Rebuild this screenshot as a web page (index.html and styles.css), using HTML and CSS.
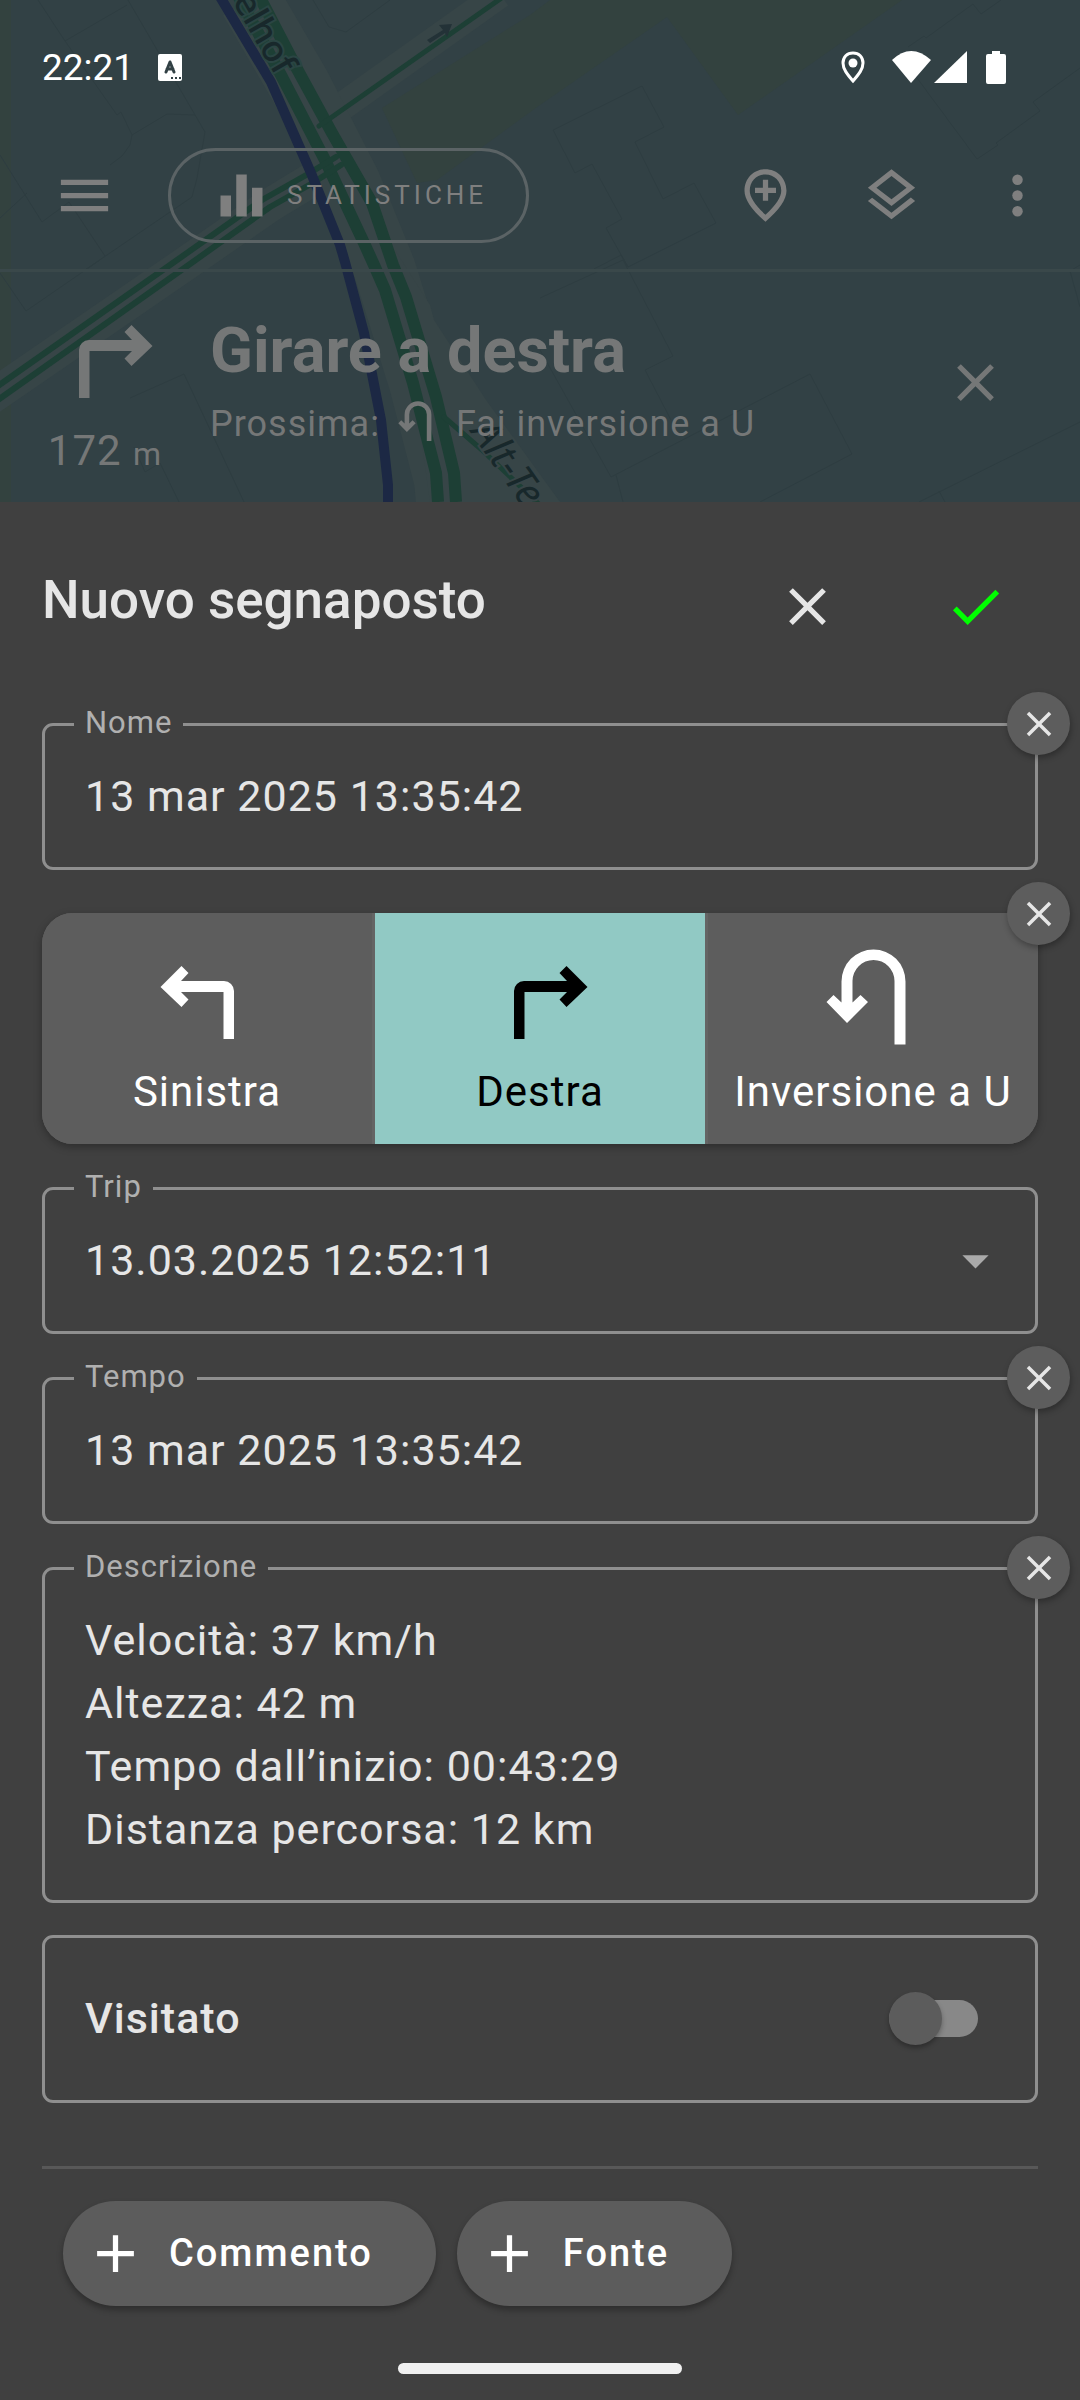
FILE: index.html
```html
<!DOCTYPE html>
<html lang="it">
<head>
<meta charset="utf-8">
<meta name="viewport" content="width=device-width, initial-scale=1">
<title>Nuovo segnaposto</title>
<link rel="stylesheet" href="styles.css">
</head>
<body>
<svg class="defs" aria-hidden="true">
  <symbol id="close" viewBox="0 0 24 24"><path d="M19 6.41 17.59 5 12 10.59 6.41 5 5 6.41 10.59 12 5 17.59 6.41 19 12 13.41 17.59 19 19 17.59 13.41 12z"/></symbol>
  <symbol id="plus" viewBox="0 0 24 24"><path d="M19 13h-6v6h-2v-6H5v-2h6V5h2v6h6z"/></symbol>
  <symbol id="turn" viewBox="0 0 105 105"><path d="M5.5 43 26.5 22 33.5 29 26 37H69a10 10 0 0 1 10 10V95H68.5V48H26L33.5 55.5 26.5 63Z"/></symbol>
  <symbol id="turn-right" viewBox="0 0 105 105"><path transform="translate(105 0) scale(-1 1)" d="M5.5 43 26.5 22 33.5 29 26 37H69a10 10 0 0 1 10 10V95H68.5V48H26L33.5 55.5 26.5 63Z"/></symbol>
  <symbol id="uturn" viewBox="0 0 105 105"><path d="M5.5 58 12.5 51 20.5 58.5V37.5A32 32 0 0 1 84.5 37.5V100.5H73.5V37A21 21 0 0 0 31.5 37V58.5L39.5 51 47 58 26 79Z"/></symbol>
</svg>

<header class="top">
  <svg class="map" viewBox="0 0 1080 502" preserveAspectRatio="xMidYMin slice" aria-hidden="true">
    <rect width="1080" height="502" fill="#324145"/>
    <rect width="11" height="502" fill="#33423f"/>
    <path fill="#33423f" d="M550 0 530 15 382 108 417 183 437 180 540 105 667 17 738 115 902 0Z"/>
    <g fill="none" stroke="#2e3d41" stroke-width="1">
      <path d="M553 130 642 86 664 127 635 142 663 199 694 183 716 223 628 267 606 228 622 219 592 164 575 173ZM594 269 621 255 628 267"/>
      <path d="M908 47 924 36 926 38 973 4 981 14 1001 0M917 78 977 159 998 145 996 143 1040 111 1033 102 1080 68"/>
      <path d="M38 0 65 41 117 115 121 112 132 135 130 145 122 156 110 165M128 0 205 132 197 178 192 197 85 270M65 41 127 5M132 135 167 114 195 115M0 155 42 222 69 202 105 256M313 0 329 27 346 32 390 0"/>
      <path d="M130 398 184 374 244 502M134 447 145 472 160 463 179 502M0 273 26 311 100 260M0 218 27 193"/>
      <path d="M540 298 623 260 673 356 645 370 671 420M540 350 611 477 810 374 852 454 760 502M616 475 623 502M919 502 1080 422M939 491 945 502"/>
      <path d="M1080 307 1070 271 1080 265"/>
    </g>
    <g fill="none" stroke="#374547">
      <path stroke-width="34" d="M336 165 270 205 185 264-10 398"/>
      <path stroke-width="28" d="M330 115 500-6"/>
      <path stroke-width="62" d="M250 0 300 86 350 184 385 270 420 383 445 480 447 502"/>
      <path fill="#374547" stroke="none" d="M395 250 430 305 434 320 486 400 560 502H430Z"/>
    </g>
    <g fill="none" stroke="#1d3f35" stroke-linejoin="round">
      <path stroke-width="12" d="M235-10 281 75 325 160 364 243 374 265 385 290 413 383 436 473 438 502"/>
      <path stroke-width="12" d="M256-10 296 67 332 133 372 203 393 265 406 297 436 397 454 473 456 502"/>
      <path stroke-width="5" stroke-linecap="round" d="M319 126 332 117 510-8M444 417 482 450 545 510"/>
      <path stroke-width="6" stroke-linecap="round" d="M336 157 308 174 262 200 170 265-5 388M341 165 311 184 270 207 190 264-5 402"/>
    </g>
    <path fill="none" stroke="#1c2844" stroke-width="10" d="M219-5 271 82 311 173 340 245 345 262 364 333 381 420 388 485V502"/>
    <path fill="#233237" d="M427 40 443 30 439 25 452 24 447 37 445 33 430 43Z"/>
    <g class="street">
      <text x="276" y="77" text-anchor="end" transform="rotate(60 276 77)">elhof</text>
      <text class="street-minor" x="470" y="432" transform="rotate(55 470 432)">Alt-Te</text>
    </g>
  </svg>

  <div class="status">
    <span class="clock">22:21</span>
    <svg class="badge-a" width="24" height="27" viewBox="0 0 24 27" aria-hidden="true"><rect width="24" height="27" rx="2" fill="#fff"/><path d="M8 18 12 8 16 18M9 15h6" fill="none" stroke="#324145" stroke-width="3" stroke-linecap="round" stroke-linejoin="round"/><path d="M13 24h2m2 0h2m2 0h2" stroke="#324145" stroke-width="2"/></svg>
    <svg class="status-icons" width="166" height="35" viewBox="0 0 166 35" fill="#fff" aria-hidden="true">
      <path d="M13 3C7 3 3 7 3 13c0 6 4 11 10 18 6-7 10-12 10-18 0-6-4-10-10-10Z" fill="none" stroke="#fff" stroke-width="3"/><circle cx="13" cy="13" r="4.500"/>
      <path d="M52 10Q71-8 91 10L71 33Z"/><path d="M94 33 127 1V33Z"/>
      <path d="M152 1h8v3h4q2 0 2 2v26q0 2-2 2h-16q-2 0-2-2V6q0-2 2-2h4Z"/>
    </svg>
  </div>

  <nav class="toolbar">
    <button class="icon-btn" aria-label="Menu"><svg viewBox="0 0 24 24"><path d="M3 18h18v-2H3zm0-5h18v-2H3zm0-7v2h18V6z"/></svg></button>
    <button class="stats"><svg viewBox="0 0 24 24" aria-hidden="true"><path d="M10 20h4V4h-4zm-6 0h4v-8H4zM16 9v11h4V9z"/></svg><span>STATISTICHE</span></button>
    <div class="actions">
      <button class="icon-btn" aria-label="Aggiungi segnaposto"><svg viewBox="0 0 24 24"><path fill-rule="evenodd" d="M12 2c4.200 0 8 3.220 8 8.200 0 3.320-2.670 7.250-8 11.800-5.330-4.550-8-8.480-8-11.800C4 5.220 7.800 2 12 2zm6 8.200C18 6.570 15.350 4 12 4s-6 2.570-6 6.200c0 2.340 1.950 5.440 6 9.140 4.050-3.700 6-6.800 6-9.140zM11 6h2v3h3v2h-3v3h-2v-3H8V9h3z"/></svg></button>
      <button class="icon-btn" aria-label="Livelli"><svg viewBox="0 0 24 24"><path d="M11.990 18.540l-7.370-5.730L3 14.070l9 7 9-7-1.630-1.270-7.380 5.740zM12 16l7.360-5.730L21 9l-9-7-9 7 1.630 1.270L12 16zm0-11.470L17.740 9 12 13.470 6.260 9 12 4.530z"/></svg></button>
      <button class="icon-btn" aria-label="Altro"><svg viewBox="0 0 24 24"><circle cx="12" cy="6" r="2"/><circle cx="12" cy="12" r="2"/><circle cx="12" cy="18" r="2"/></svg></button>
    </div>
  </nav>

  <section class="guide">
    <div class="maneuver">
      <svg class="arrow"><use href="#turn-right"/></svg>
      <div class="distance">172 <small>m</small></div>
    </div>
    <div class="instruction">
      <h1>Girare a destra</h1>
      <div class="next"><span>Prossima:</span><svg><use href="#uturn"/></svg><span>Fai inversione a U</span></div>
    </div>
    <button class="icon-btn end-guide" aria-label="Chiudi navigazione"><svg><use href="#close"/></svg></button>
  </section>
</header>

<main class="sheet">
  <div class="sheet-head">
    <h2>Nuovo segnaposto</h2>
    <button class="icon-btn" aria-label="Annulla"><svg><use href="#close"/></svg></button>
    <button class="icon-btn confirm" aria-label="Conferma"><svg viewBox="0 0 24 24"><path d="M9 16.170 4.830 12l-1.420 1.410L9 19 21 7l-1.410-1.410z"/></svg></button>
  </div>

  <form class="form">
    <div class="item outlined">
      <label for="nome">Nome</label>
      <input id="nome" type="text" value="13 mar 2025 13:35:42">
      <button type="button" class="remove" aria-label="Rimuovi nome"><svg><use href="#close"/></svg></button>
    </div>

    <div class="item">
      <div class="segments" role="radiogroup" aria-label="Direzione">
        <label><input type="radio" name="dir"><svg class="arrow"><use href="#turn"/></svg><span>Sinistra</span></label>
        <label><input type="radio" name="dir" checked><svg class="arrow"><use href="#turn-right"/></svg><span>Destra</span></label>
        <label><input type="radio" name="dir"><svg class="arrow"><use href="#uturn"/></svg><span>Inversione a U</span></label>
      </div>
      <button type="button" class="remove" aria-label="Rimuovi direzione"><svg><use href="#close"/></svg></button>
    </div>

    <div class="item outlined">
      <label for="trip">Trip</label>
      <select id="trip"><option>13.03.2025 12:52:11</option></select>
      <svg class="caret" viewBox="0 0 24 24" aria-hidden="true"><path d="M7 10l5 5 5-5z"/></svg>
    </div>

    <div class="item outlined">
      <label for="tempo">Tempo</label>
      <input id="tempo" type="text" value="13 mar 2025 13:35:42">
      <button type="button" class="remove" aria-label="Rimuovi tempo"><svg><use href="#close"/></svg></button>
    </div>

    <div class="item outlined">
      <label for="descrizione">Descrizione</label>
      <textarea id="descrizione" rows="4">Velocità: 37 km/h
Altezza: 42 m
Tempo dall’inizio: 00:43:29
Distanza percorsa: 12 km</textarea>
      <button type="button" class="remove" aria-label="Rimuovi descrizione"><svg><use href="#close"/></svg></button>
    </div>

    <div class="visited">
      <label for="visitato">Visitato</label>
      <input id="visitato" class="switch" type="checkbox" role="switch">
    </div>

    <div class="extras">
      <button type="button" class="chip"><svg><use href="#plus"/></svg>Commento</button>
      <button type="button" class="chip"><svg><use href="#plus"/></svg>Fonte</button>
    </div>
  </form>
  <div class="handle"></div>
</main>
</body>
</html>
```
FILE: styles.css
```css
* { box-sizing: border-box; }

body {
  margin: 0;
  background: #404040;
  color: #e6e6e6;
  font-family: Roboto, "Liberation Sans", sans-serif;
  font-size: 42px;
  line-height: 63px;
  letter-spacing: 1px;
}

button, input, select, textarea { font: inherit; letter-spacing: inherit; color: inherit; }
button { border: 0; padding: 0; background: none; }
svg { display: block; fill: currentColor; flex: none; }
h1, h2 { margin: 0; }
.defs { position: absolute; width: 0; height: 0; }

.icon-btn { flex: none; }
.icon-btn svg { width: 63px; height: 63px; }

/* Dimmed map and navigation */
.top { position: relative; z-index: 0; overflow: hidden; color: #7f7f7f; }
.map { position: absolute; inset: 0; width: 100%; height: 100%; z-index: -1; }
.street text { font: 500 36px "Noto Sans", sans-serif; letter-spacing: 0; fill: #18282b; stroke: #2a4543; stroke-width: 4px; paint-order: stroke; }
.street .street-minor { font-size: 40px; font-weight: 400; font-style: italic; stroke: #374547; }

.status { display: flex; align-items: center; height: 122px; padding: 12px 74px 0 42px; color: #fff; }
.clock { font-size: 37px; letter-spacing: 0; }
.badge-a { margin-left: 24px; }
.status-icons { margin-left: auto; }

.toolbar { display: flex; align-items: center; height: 150px; padding: 0 31px 0 53px; border-bottom: 3px solid #3a484a; }
.stats {
  display: flex; align-items: center; gap: 14px;
  margin-left: 52px; padding: 13px 39px;
  border: 3px solid #5b6365; border-radius: 48px;
  font-size: 26px; letter-spacing: 4px;
}
.stats svg { width: 63px; height: 63px; }
.actions { display: flex; gap: 63px; margin-left: auto; }

.guide { display: flex; align-items: flex-start; padding: 31px 73px 20px 0; color: #757777; }
.guide h1 { font-size: 63px; line-height: 75px; font-weight: 700; letter-spacing: 0; }
.maneuver { display: flex; flex-direction: column; align-items: center; gap: 11px; width: 210px; }
.arrow { width: 105px; height: 105px; }
.distance small { font-size: 32px; line-height: 32px; }
.instruction { flex: 1; padding-top: 10px; }
.next { display: flex; gap: 16px; margin-top: 11px; font-size: 36px; line-height: 51px; }
.next svg { width: 44px; height: 44px; }
.end-guide { margin-top: 48px; }

/* Placemark sheet */
.sheet { padding: 67px 42px 26px; }
.sheet-head { display: flex; align-items: flex-end; gap: 105px; padding-right: 31px; }
.sheet-head h2 { flex: 1; padding-bottom: 6px; font-size: 53px; font-weight: 500; letter-spacing: 0; white-space: nowrap; }
.confirm { color: #0f0; }
.form { padding-top: 42px; }

.item { position: relative; margin-top: 43px; }
.outlined, .visited { border: 3px solid #8f8f8f; border-radius: 11px; font-size: 43px; }
.outlined { padding: 39px 40px; }
.outlined > label {
  position: absolute; top: -24px; left: 29px;
  padding: 0 11px;
  background: #404040; color: #b0b0b0;
  font-size: 31px; line-height: 42px;
}
.outlined input, .outlined select, .outlined textarea {
  display: block; width: 100%; height: 63px; margin: 0; padding: 0;
  border: 0; outline: 0; background: none; appearance: none; resize: none;
}
.outlined textarea { height: 252px; overflow: hidden; line-height: 63px; }
.caret { position: absolute; right: 28px; top: 39px; width: 63px; height: 63px; color: #aaa; pointer-events: none; }

.remove {
  position: absolute; top: -31px; right: -32px;
  display: grid; place-items: center;
  width: 63px; height: 63px;
  border-radius: 50%; background: #5d5d5d;
  box-shadow: 1px 3px 6px rgba(0, 0, 0, .3);
}
.outlined .remove { top: -34px; right: -35px; }
.remove svg { width: 42px; height: 42px; }

.segments {
  display: grid; grid-template-columns: repeat(3, 1fr); gap: 3px;
  border-radius: 31px; overflow: hidden;
  background: #646464; color: #fff;
  box-shadow: 0 3px 8px rgba(0, 0, 0, .3);
}
.segments label { position: relative; display: flex; flex-direction: column; align-items: center; gap: 11px; padding: 31px 0 21px; background: #5d5d5d; }
.segments label:has(:checked) { background: #91c9c4; color: #000; }
.segments input { position: absolute; opacity: 0; }

.visited { display: flex; align-items: center; justify-content: space-between; margin-top: 32px; padding: 49px 57px 50px 40px; font-weight: 500; }
.switch {
  appearance: none; display: flex; align-items: center;
  width: 89px; height: 37px; margin: 0;
  border-radius: 19px; background: #888;
}
.switch::before { content: ""; width: 53px; height: 53px; border-radius: 50%; background: #5c5c5c; box-shadow: 0 3px 5px rgba(0, 0, 0, .3); }

.extras { display: flex; gap: 21px; margin-top: 63px; padding: 32px 21px 0; border-top: 3px solid #585858; }
.chip {
  display: flex; align-items: center; gap: 22px;
  padding: 21px 63px 21px 21px;
  border-radius: 53px; background: #5c5c5c; color: #fff;
  font-size: 38px; font-weight: 500; letter-spacing: 2px;
  box-shadow: 0 4px 6px rgba(0, 0, 0, .3);
}
.chip svg { width: 63px; height: 63px; }

.handle { width: 284px; height: 11px; margin: 57px auto 0; border-radius: 6px; background: #f0f0f0; }
```
